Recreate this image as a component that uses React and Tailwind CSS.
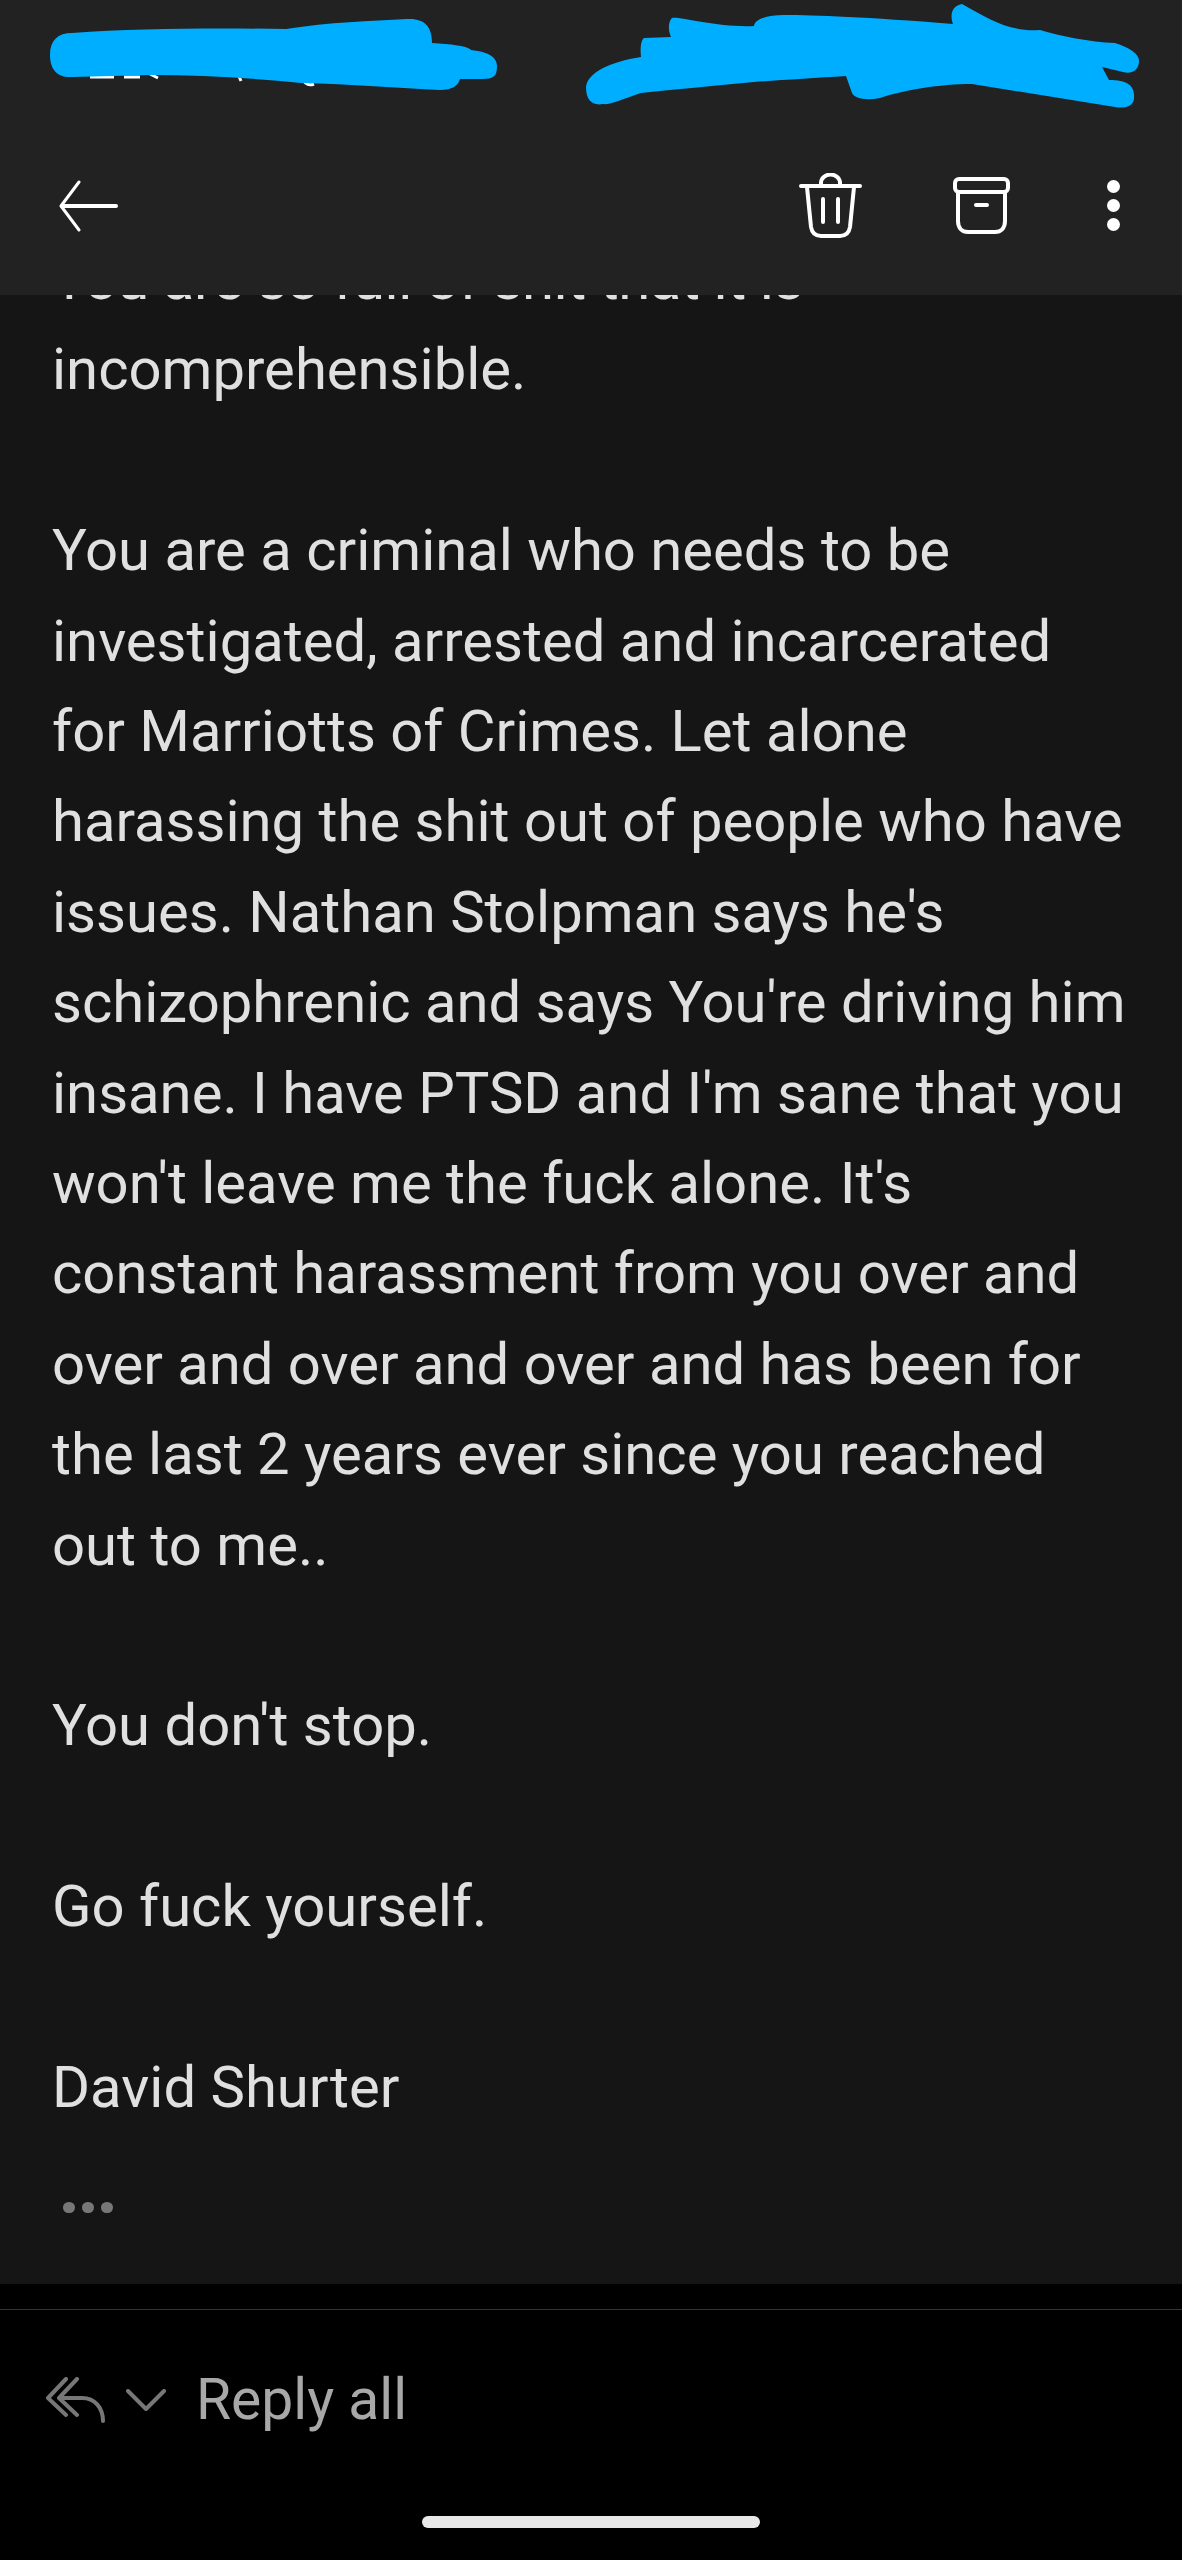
const paragraphs = [
  ["incomprehensible."],
  [
    "You are a criminal who needs to be",
    "investigated, arrested and incarcerated",
    "for Marriotts of Crimes. Let alone",
    "harassing the shit out of people who have",
    "issues. Nathan Stolpman says he's",
    "schizophrenic and says You're driving him",
    "insane. I have PTSD and I'm sane that you",
    "won't leave me the fuck alone. It's",
    "constant harassment from you over and",
    "over and over and over and has been for",
    "the last 2 years ever since you reached",
    "out to me..",
  ],
  ["You don't stop."],
  ["Go fuck yourself."],
  ["David Shurter"],
];

function Scribbles() {
  return (
    <svg width="1182" height="120" viewBox="0 0 1182 120" className="absolute left-0 top-0">
      <path d="M90 77h24M124 77h16M150 74l8 4M238 74l3 7M302 78q4 9 12 6" stroke="#fff" strokeWidth="3" fill="none" />
      <path
        fill="#00aeff"
        d="M50 55C50 40 58 33 72 33C140 28 220 28 286 29C330 22 370 21 407 19C425 18 432 27 432 43C450 44 468 46 471 50C490 52 497 58 497 66C497 76 494 79 482 79L460 79C458 86 452 90 440 90C400 88 350 84 301 83C250 78 200 75 151 75L72 77C60 78 50 72 50 55Z"
      />
      <path
        fill="#00aeff"
        d="M586 87C588 72 610 62 641 57C640 48 641 40 644 38L671 37C668 30 668 22 672 18C678 16 720 28 754 26C755 18 770 15 784 15C815 15 867 17 953 24C950 16 951 6 962 4C990 20 1010 32 1040 30C1060 36 1090 42 1115 43C1130 48 1140 54 1139 62C1138 72 1130 74 1123 72L1102 67L1109 80C1128 80 1135 86 1134 98C1134 106 1125 109 1115 107L972 84C940 84 904 90 880 98C865 101 854 98 852 93L846 76C815 78 780 80 754 82C710 86 670 90 641 93C620 100 610 105 603 104C592 106 586 100 586 87Z"
      />
    </svg>
  );
}

function Trash() {
  return (
    <svg width="63" height="65" viewBox="0 0 63 65" fill="none" stroke="#fff" strokeWidth="4" strokeLinecap="round" strokeLinejoin="round">
      <path d="M2 13H61" />
      <path d="M22 12V10a9 8 0 0 1 19 0V12" />
      <path d="M8 14L12 54C13 60 16 63 22 63H41C47 63 50 60 51 54L55 14" />
      <path d="M24 26V49M39 26V49" />
    </svg>
  );
}

function Archive() {
  return (
    <svg width="57" height="57" viewBox="0 0 57 57" fill="none" stroke="#fff" strokeWidth="4" strokeLinecap="round" strokeLinejoin="round">
      <rect x="2" y="2" width="53" height="13" rx="4" />
      <path d="M5 15V44C5 51 9 55 15 55H42C48 55 52 51 52 44V15" />
      <path d="M23 28H34" />
    </svg>
  );
}

export default function App() {
  return (
    <div className="relative flex h-[2560px] w-[1182px] flex-col overflow-hidden bg-black font-['Roboto','Liberation_Sans',sans-serif]">
      <header className="relative z-10 h-[295px] shrink-0 bg-[#222222]">
        <Scribbles />
        <div className="flex items-center pt-[173px] pl-[59px] pr-[62px]">
          <svg width="60" height="52" viewBox="0 0 60 52" fill="none" stroke="#fff" strokeLinecap="round" strokeLinejoin="round">
            <path d="M20 2L2 26L20 50" strokeWidth="3" />
            <path d="M3 26H57" strokeWidth="4" />
          </svg>
          <div className="ml-auto flex items-center">
            <Trash />
            <div className="ml-[91px]"><Archive /></div>
            <div className="ml-[97px] flex flex-col gap-[6px]">
              <span className="h-[13px] w-[13px] rounded-full bg-white" />
              <span className="h-[13px] w-[13px] rounded-full bg-white" />
              <span className="h-[13px] w-[13px] rounded-full bg-white" />
            </div>
          </div>
        </div>
      </header>

      <main className="relative h-[1989px] shrink-0 overflow-hidden bg-[#151515] pl-[52px] text-[58px] leading-[90.4px] text-[#e0e0e0]">
        <div className="mt-[-61px] whitespace-nowrap tracking-[-0.4px]">You are so full of shit that it is</div>
        {paragraphs.map((lines, i) => (
          <div key={i} className="mb-[90.4px] whitespace-nowrap">
            {lines.map((line) => (
              <div key={line}>{line}</div>
            ))}
          </div>
        ))}
        <div className="mt-[-21px] ml-[11px] flex gap-[7px]">
          <span className="h-[11px] w-[12px] rounded-full bg-[#777777]" />
          <span className="h-[11px] w-[12px] rounded-full bg-[#777777]" />
          <span className="h-[11px] w-[12px] rounded-full bg-[#777777]" />
        </div>
      </main>

      <footer className="relative flex-1 bg-black">
        <div className="mt-[25px] h-[1px] bg-[#333333]" />
        <div className="mt-[60px] flex items-center pl-[46px]">
          <svg width="60" height="46" viewBox="0 0 60 46" fill="none" stroke="#777777" strokeWidth="4" strokeLinecap="round" strokeLinejoin="round">
            <path d="M20 2L2 21L20 38" />
            <path d="M31 2L13 21L31 38" />
            <path d="M14 21H36C49 21 57 31 57 44" />
          </svg>
          <svg className="ml-[20px]" width="40" height="22" viewBox="0 0 40 22" fill="none" stroke="#777777" strokeWidth="4" strokeLinecap="round" strokeLinejoin="round">
            <path d="M2 2L20 20L38 2" />
          </svg>
          <span className="ml-[30px] text-[57px] leading-[60px] text-[#a8a8a8]">Reply all</span>
        </div>
        <div className="absolute left-[422px] top-[232px] h-[12px] w-[338px] rounded-full bg-[#e8e8e8]" />
      </footer>
    </div>
  );
}
